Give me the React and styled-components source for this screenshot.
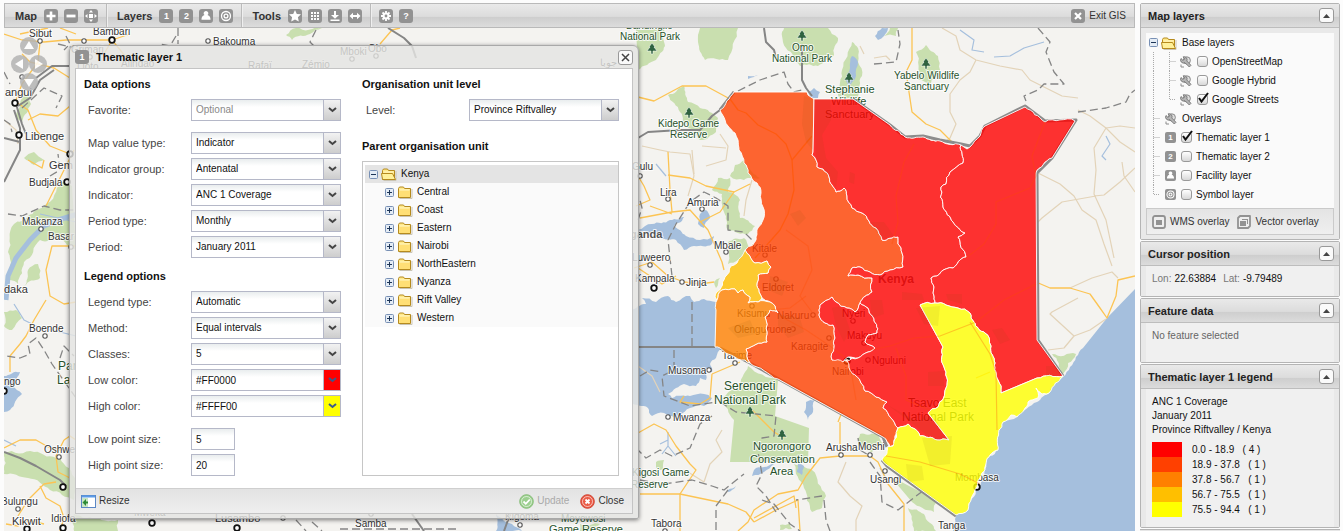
import React from "react";
import styled, { createGlobalStyle, css } from "styled-components";

const GlobalStyle = createGlobalStyle`
  * { box-sizing: border-box; }
  body {
    margin: 0;
    background: #fcfcfc;
    color: #111;
    font: 10px/14px "Liberation Sans", Arial, Helvetica, sans-serif;
  }
  button, input, select { font: inherit; color: inherit; }
  ul, dl, h2, h3, p { margin: 0; padding: 0; list-style: none; }
`;

const barGradient = "linear-gradient(#e9e9e9 0%, #dcdcdc 54%, #cecece 58%, #dcdcdc 100%)";

const Page = styled.div`
  display: flex;
  gap: 5px;
  min-height: 100vh;
  padding: 3px 3px 0 4px;
`;

const MainPanel = styled.main`
  flex: 1;
  min-width: 0;
  display: flex;
  flex-direction: column;
`;

/* ---------- toolbar ---------- */

const Toolbar = styled.div`
  display: flex;
  align-items: stretch;
  height: 25px;
  border: 1px solid #b9b9b9;
  background: ${barGradient};
`;

const ToolGroup = styled.div`
  display: flex;
  align-items: center;
  gap: 6px;
  padding: 0 8px 0 ${(p) => p.$start || 8}px;
  border-right: ${(p) => (p.$last ? "0" : "1px solid #bbb")};
  box-shadow: ${(p) => (p.$last ? "none" : "1px 0 #efefef")};
`;

const ToolTitle = styled.span`
  margin-right: 1px;
  font-size: 11px;
  font-weight: bold;
  color: #333;
`;

const Spacer = styled.div`
  flex: 1;
`;

const PlainButton = styled.button`
  display: inline-flex;
  align-items: center;
  gap: ${(p) => p.$gap || 0}px;
  padding: 0;
  border: 0;
  background: none;
  color: #333;
  cursor: pointer;
  &:disabled { color: #aaa; cursor: default; }
`;

const Tile = styled.span`
  display: inline-flex;
  align-items: center;
  justify-content: center;
  flex: none;
  width: 14px;
  height: 14px;
  border-radius: 3px;
  background: #929292;
  color: #fff;
  font: bold 9px/14px "Liberation Sans", Arial, sans-serif;
  svg { display: block; }
`;

const glyphs = {
  plus: <path d="M7 2.500v9M2.500 7h9" stroke="#fff" strokeWidth="2.600" />,
  minus: <path d="M2.500 7h9" stroke="#fff" strokeWidth="2.800" />,
  full: (
    <g fill="#fff">
      <path d="M7 1l2 2.500H5zM7 13l2-2.500H5zM1 7l2.500-2v4zM13 7l-2.500-2v4z" />
      <rect x="5" y="5" width="4" height="4" />
    </g>
  ),
  person: <path d="M7 2a2.300 2.300 0 0 1 1.500 4.100C10.800 6.800 11.500 8.500 11.500 10.800h-9C2.500 8.500 3.200 6.800 5.500 6.100A2.300 2.300 0 0 1 7 2z" fill="#fff" />,
  target: (
    <g fill="none" stroke="#fff" strokeWidth="1.300">
      <circle cx="7" cy="7" r="4.500" />
      <circle cx="7" cy="7" r="1.900" />
    </g>
  ),
  star: <path d="M7 1l1.800 3.900 4.200.4-3.100 2.900.9 4.300L7 10.400l-3.800 2.100.9-4.300L1 5.300l4.200-.4z" fill="#fff" />,
  grid: <path d="M3 3h2v2H3zM6 3h2v2H6zM9 3h2v2H9zM3 6h2v2H3zM6 6h2v2H6zM9 6h2v2H9zM3 9h2v2H3zM6 9h2v2H6zM9 9h2v2H9z" fill="#fff" />,
  down: <path d="M6 2h2v4h3L7 9.800 3 6h3zM2.500 10.500h9V12h-9z" fill="#fff" />,
  arrows: <path d="M1.500 7L5 3.800V6h4V3.800L12.500 7 9 10.200V8H5v2.200z" fill="#fff" />,
  gear: (
    <g>
      <path d="M7 2v10M2 7h10M3.500 3.500l7 7M10.500 3.500l-7 7" stroke="#fff" strokeWidth="1.800" />
      <circle cx="7" cy="7" r="3.400" fill="#fff" />
      <circle cx="7" cy="7" r="1.400" fill="#929292" />
    </g>
  ),
  cross: <path d="M4 4l6 6M10 4l-6 6" stroke="#fff" strokeWidth="2.200" />,
};

function IconTile({ name, text }) {
  return (
    <Tile aria-hidden="true">
      {text || (
        <svg width="14" height="14" viewBox="0 0 14 14">
          {glyphs[name]}
        </svg>
      )}
    </Tile>
  );
}

function ToolButton({ label, ...icon }) {
  return (
    <PlainButton type="button" aria-label={label}>
      <IconTile {...icon} />
    </PlainButton>
  );
}

/* ---------- map ---------- */

const MapArea = styled.section`
  position: relative;
  flex: 1;
  overflow: hidden;
  background: #f4f3f0;
`;

const MapSvg = styled.svg`
  position: absolute;
  inset: 0;
  width: 100%;
  height: 100%;
  font-family: "Liberation Sans", Arial, sans-serif;
`;

const Label = styled.text`
  font-size: ${(p) => p.$size || 10}px;
  font-weight: ${(p) => (p.$bold ? "bold" : "normal")};
  fill: ${(p) => (p.$park ? "#27522b" : p.$bold ? "#555" : "#333")};
  stroke: #fff;
  stroke-width: 2px;
  stroke-opacity: 0.8;
  stroke-linejoin: round;
  paint-order: stroke;
`;

const GREEN = "#c9dfaf";
const WATER = "#a5bfdd";

const parks = [
  "M700 28L738 28L728 60L705 60L698 42Z",
  "M636 28L664 28L665 46L656 60L638 70Z",
  "M784 28L828 28L838 38L834 55L818 66L800 66L786 48L782 36Z",
  "M838 95L842 70L852 42L858 48L858 62L862 76L858 96L846 104Z",
  "M668 95L684 86L688 102L700 108L718 118L716 132L700 140L688 128L680 112Z",
  "M916 52L926 45L938 56L940 70L930 84L918 80Z",
  "M890 28L898 28L896 36L884 36Z",
  "M735 165L744 160L752 172L760 178L744 180L730 176Z",
  "M718 178L730 178L728 192L740 200L740 218L755 226L748 234L728 230L724 212L722 194L712 190Z",
  "M728 242L744 238L750 248L738 260L728 264Z",
  "M714 282L720 278L716 288Z",
  "M748 366L778 380L775 416L809 428L808 462L730 462L734 420L722 398L738 388Z",
  "M656 462L664 460L664 470L656 468Z",
  "M794 464L812 470L826 496L822 508L812 512L804 488Z",
  "M860 434L876 434L884 444L872 452L858 444Z",
  "M1052 354L1076 354L1063 374Z",
  "M890 476L936 500L934 512L912 502Z",
  "M908 508L924 514L936 531L914 531Z",
  "M286 35L296 28L322 28L310 34L292 40Z",
  "M780 525L790 523L792 529L780 530Z",
  "M24 92L31 104L22 122L16 116L20 104Z",
  "M24 158L34 152L44 160L34 165Z",
  "M62 182L72 186L76 250L60 238L40 240L24 262L18 284L10 280L8 252L14 224L28 216L44 206Z",
  "M4 312L16 310L22 318L12 330L4 326Z",
  "M28 270L38 264L40 278L24 286Z",
  "M4 452L34 452L60 458L76 480L74 500L50 490L28 478L4 474Z",
  "M74 514L92 518L118 520L118 531L74 531Z",
  "M580 524L600 524L592 531L580 531Z",
];

const waters = [
  "M1135 289L1107 318L1083 348L1070 367L1063 377L1050 392L1037 402L1017 417L1003 422L999 430L998 450L990 456L985 470L977 488L968 510L956 515L953 531L1135 531Z",
  "M630 310L646 304L642 298L656 302L668 296L676 302L690 296L694 302L704 299L716 302L715 347L722 348L716 358L710 364L712 372L704 370L706 380L700 378L696 386L684 384L676 388L668 394L672 398L690 396L704 394L712 398L704 406L690 408L680 416L664 413L652 416L648 408L630 402Z",
  "M638 230L652 224L670 220L686 216L674 226L686 236L700 240L714 236L712 244L694 246L684 250L676 240L660 238Z",
  "M700 214L706 210L710 218L704 228L698 224Z",
  "M808 92L814 88L820 92L818 98L810 97Z",
  "M852 56L858 62L856 76L850 88L846 80L850 68Z",
  "M806 402L815 400L813 412L808 420L804 412Z",
  "M754 470L774 464L764 472L752 476Z",
  "M798 464L804 466L802 475L797 472Z",
  "M728 490L736 486L732 490L728 492Z",
  "M875 36L882 28L888 28L884 36L878 40Z",
  "M748 76L758 75L754 77L748 79Z",
  "M4 376L20 372L12 386L22 394L10 410L4 412Z",
  "M496 514L512 524L522 531L496 531Z",
];

const rivers = [
  "M78 214L58 220L44 226L30 240L16 258L8 276L6 300",
  "M14 304L24 320L40 328L60 332L76 336",
  "M40 214L58 218L76 222",
  "M960 30L974 40L972 50L984 52",
  "M994 57L1010 56L1024 48L1044 42",
  "M1106 136L1110 144L1102 156L1106 160",
  "M656 164L666 176",
  "M4 440L16 446",
  "M668 432L668 446L662 454M668 446L676 456M668 440L660 444",
  "M880 468L886 478",
];

const mainRoads = [
  "M638 97L654 101L682 86L706 86L730 99L738 110L746 113L758 125L776 134L786 144L792 160L794 190L788 214L780 230L766 246L755 258",
  "M634 268L652 262L668 276L684 282L700 284L714 282",
  "M668 152L670 190L672 212L690 210L708 230L716 248L722 262L724 270",
  "M668 175L690 178L706 186L734 192L750 184",
  "M638 176L644 186L650 200L636 206",
  "M650 206L672 214M672 212L640 218",
  "M700 222L720 212L734 192",
  "M912 28L912 60L906 72L912 112L926 124L940 130L952 142",
  "M792 160L812 136",
  "M638 268L662 284L676 276",
  "M712 374L740 362M712 374L710 398L700 404L680 402L684 396",
  "M752 410L774 432L784 438",
  "M838 422L842 412M840 422L840 456L820 458L806 476L798 490L778 494L754 510L748 522L738 531",
  "M840 456L870 456L878 462L888 484L904 504L904 531",
  "M638 433L654 424L666 430L676 446L690 464L696 470L688 482L680 494L680 531",
  "M640 494L680 494L728 504L746 512L754 522",
  "M754 518L794 496L796 508",
  "M754 522L776 510L798 500L800 531",
  "M1036 282L1050 288L1070 288L1090 294L1100 308L1107 318L1116 296L1118 280L1135 276",
  "M976 378L990 372",
  "M4 34L22 40L44 42L66 40L84 40L112 40L130 34",
  "M40 42L38 62L22 84L16 100",
  "M16 102L28 110L36 130L50 146L70 154",
  "M22 54L30 62L54 68L70 78",
  "M28 120L40 114L58 116L70 106",
  "M20 34L48 28M60 28L76 34",
  "M44 160L42 168L28 160",
  "M74 150L54 190L46 206",
  "M76 246L52 246L46 270L50 296L64 304L76 302",
  "M46 300L34 320L26 336L20 344L10 356L10 372",
  "M64 440L70 436L76 440M64 440L56 456L58 472L70 478",
  "M4 448L20 440L36 440L50 448L62 450",
  "M18 516L28 500L44 484L56 482",
  "M40 486L46 498L60 506L64 518L60 531",
  "M6 524L18 526L28 520L44 524",
  "M112 40L130 62M112 40L104 54",
  "M380 44L392 30L400 28",
];

const minorRoads = [
  "M642 146L660 150L670 152L690 154L694 176",
  "M720 134L728 146L726 160L706 166",
  "M694 176L688 196M692 150L694 174M702 146L726 148",
  "M942 28L956 36L960 50L976 60L1000 66L1022 70L1030 80L1046 88L1062 96L1078 98",
  "M976 60L970 72L960 80L950 94L950 112L956 124L950 138L946 141",
  "M1078 110L1090 116L1106 128L1120 142L1135 152",
  "M1106 128L1120 126L1135 128",
  "M1106 128L1094 148L1096 170L1094 194L1106 220L1114 258",
  "M1096 196L1062 202L1042 218L1036 224",
  "M1036 172L1060 184L1074 196L1082 210L1096 220L1104 244L1112 266",
  "M1135 168L1120 182L1104 195L1094 196",
  "M1135 192L1124 176L1122 162",
  "M1070 288L1092 278L1112 272L1118 278",
  "M1078 298L1052 312L1050 314L1074 336L1064 348L1048 350",
  "M1106 319L1090 330L1074 336",
  "M752 180L746 200L744 216",
  "M638 366L652 376L660 392",
  "M688 472L704 482L710 464L722 452L716 440L722 430",
  "M846 462L838 482L850 496L862 506L856 520L856 531",
  "M4 120L16 130L18 144",
  "M874 58L886 56L890 60M864 54L860 46",
];

const solidBorders = [
  "M638 138L648 132L680 130L700 130L712 116L720 110L734 92",
  "M764 28L766 42L774 50L776 58M802 44L802 80L806 88L812 96",
  "M638 347L715 347",
  "M4 182L12 166L20 150L20 128L14 110M4 138L20 142L20 128",
  "M16 104L22 124L26 134M36 78L52 66L70 66",
  "M388 28L404 38L412 46L416 58",
  "M4 452L20 458L36 466L60 480L66 486",
  "M18 106L30 98L40 80L54 70",
  "M504 531L508 520L512 510",
  "M412 514L424 531",
];

const dashedBorders = [
  "M738 91L760 80L784 72L788 84L794 92L802 90",
  "M1038 28L1050 42L1046 52L1054 72L1064 84L1044 84L1038 90L1024 96L1026 101",
  "M1078 112L1106 108L1126 102L1130 94L1135 90",
  "M874 64L896 62L900 44L898 30",
  "M692 302L692 347",
  "M674 350L674 370L662 376L664 396L690 406L716 402",
  "M640 376L650 370L662 372",
  "M720 402L736 412L776 416L774 436L762 438L758 452L762 474L756 486L766 496L776 512",
  "M712 416L700 424L690 448L672 456L660 450L646 458L638 450",
  "M640 480L664 484L692 480L712 486L724 490L744 474",
  "M728 490L716 506L716 531",
  "M672 276L668 240L676 224L690 202L704 192L716 198L728 206L728 230L744 232L752 240",
  "M638 220L642 208L640 200",
  "M822 496L796 500M824 500L826 520L830 531",
  "M762 500L774 504L790 524L800 531",
  "M858 438L860 450L870 456",
  "M870 462L880 476L882 502L898 510L924 490",
  "M4 72L10 84M4 120L10 124L12 132",
  "M66 36L70 44L64 50M58 44L74 48",
  "M176 36L170 46L160 44M178 28L178 44",
  "M316 30L310 42L314 46",
  "M8 214L22 216L44 206L60 210L76 210",
  "M50 176L60 170L58 154",
  "M76 398L52 364L44 350L36 338L28 344L30 354L20 358L6 356",
  "M60 358L64 346L74 356",
  "M22 108L44 88L62 96L56 108",
  "M296 520L306 531M312 522L322 531",
  "M340 529L460 529",
];

const regions = [
  { fill: "#ff4000", d: "M734 92L807 92L808 95L814 99L813 152L812 155L816 160L817 167L823 169L829 177L832 185L836 192L840 191L844 188L847 196L852 208L862 213L869 221L876 228L882 240L898 237L898 244L902 253L903 267L890 270L880 275L870 272L860 267L852 268L848 276L858 275L872 278L872 292L860 303L855 312L847 308L836 302L832 297L820 305L819 315L825 323L833 325L835 338L834 348L832 360L847 361L850 370L856 376L861 383L865 391L876 397L887 402L883 408L891 418L898 428L895 445L890 447L883 437L778 379L750 363L746 349L767 342L767 332L765 317L770 310L778 313L775 306L770 302L762 298L759 292L757 283L758 275L768 273L771 267L767 261L755 263L745 250L753 245L756 237L763 220L763 207L761 193L757 183L748 173L744 163L739 150L738 140L735 133L728 126L725 120L720 110Z" },
  { fill: "#ffbf00", d: "M745 250L755 263L767 261L771 267L768 273L758 275L757 283L759 292L762 298L758 302L748 303L750 297L743 290L738 293L735 289L722 290L717 300L715 297L725 277L731 266L737 263Z" },
  { fill: "#ff8000", d: "M717 300L722 290L735 289L738 293L743 290L750 297L748 303L758 302L770 302L775 306L778 313L770 310L765 317L767 332L767 342L746 349L750 363L745 360L720 348L715 347L716 310Z" },
  { fill: "#ff0000", d: "M832 297L836 302L847 308L855 312L860 303L868 308L873 317L877 333L868 335L865 342L875 348L868 352L858 358L848 357L843 362L832 360L834 348L835 338L833 325L825 323L819 315L820 305Z" },
  { fill: "#ff0000", d: "M814 99L853 99L890 125L905 137L923 137L940 141L961 145L963 163L950 172L946 184L941 187L943 207L953 222L965 233L958 237L966 257L953 268L931 278L934 287L935 303L920 305L943 347L944 367L946 388L938 407L928 413L949 440L937 440L920 436L908 424L898 428L891 418L883 408L887 402L876 397L865 391L861 383L856 376L850 370L847 361L858 358L868 352L875 348L865 342L868 335L877 333L873 317L868 308L860 303L872 292L872 278L858 275L848 276L852 268L860 267L870 272L880 275L890 270L903 267L902 253L898 244L898 237L882 240L876 228L869 221L862 213L852 208L847 196L844 188L840 191L836 192L832 185L829 177L823 169L817 167L816 160L812 155L813 152Z" },
  { fill: "#ff0000", d: "M961 145L967 149L970 147L980 136L985 126L1025 107L1045 122L1075 121L1052 158L1036 173L1037 340L1063 376L1037 378L1001 393L998 380L995 363L991 346L985 333L974 322L970 313L958 308L946 305L935 303L934 287L931 278L953 268L966 257L958 237L965 233L953 222L943 207L941 187L946 184L950 172L963 163Z" },
  { fill: "#ffff00", d: "M920 305L935 303L946 305L958 308L970 313L974 322L985 333L991 346L995 363L998 380L1001 393L1037 378L1063 376L1050 392L1042 394L1036 388L1038 398L1028 402L1024 410L1017 417L1011 415L1003 422L999 430L998 450L990 455L985 470L977 487L968 510L956 515L887 465L882 460L886 455L887 447L893 446L898 428L908 424L920 436L937 440L949 440L928 413L938 407L946 388L944 367L943 347Z" },
];

const shades = [
  "M804 96L813 99L813 150L806 142L802 124Z",
  "M814 99L830 99L831 120L822 135L826 158L838 172L836 188L824 170L816 160Z",
  "M790 214L800 210L806 218L798 226Z",
  "M778 314L800 318L804 332L788 338L778 326Z",
  "M916 308L940 306L938 326L924 324Z",
  "M992 330L1002 328L1010 340L1000 344Z",
  "M928 372L944 371L944 386L928 386Z",
  "M886 404L908 420L928 436L946 438L936 420L926 416L918 422Z",
  "M922 438L952 436L950 464L930 466Z",
  "M906 464L922 466L924 480L908 482Z",
  "M1046 366L1056 366L1062 375L1046 377Z",
  "M870 300L882 300L884 314L872 318Z",
  "M728 328L750 320L756 334L738 338Z",
  "M850 172L855 174L854 184L849 182Z",
  "M902 292L922 294L924 300L902 300Z",
  "M946 294L962 294L962 304L948 300Z",
  "M870 222L884 222L894 236L882 240Z",
  "M832 308L842 306L850 330L844 342L836 326Z",
  "M770 276L788 282L782 296L768 290Z",
];

const innerRoads = [
  "M1036 176L1030 188L996 202L996 224L984 244L966 258",
  "M870 350L890 346L914 338L940 336L976 322L1004 300L1036 284",
  "M914 144L904 162L896 196L898 222L892 244",
  "M970 322L990 354L996 372L997 430",
  "M896 348L906 376L906 400L930 410",
  "M886 456L920 462L960 474L980 484",
  "M786 230L808 246L812 270L800 296L812 312",
  "M780 316L806 330L830 346L848 360L852 376L856 400",
  "M1045 122L1032 156L1036 176",
  "M770 310L790 308L806 296",
];

/* Breaks short edges into small irregular steps. The offset depends only on the
   two end points, so neighbouring shapes keep sharing the same boundary. */
function roughEdge(a, b, depth) {
  const len = Math.hypot(a[0] - b[0], a[1] - b[1]);
  if (len > 34 || len < 4 || depth === 0) return [b];
  const [p, q] = a[0] < b[0] || (a[0] === b[0] && a[1] < b[1]) ? [a, b] : [b, a];
  const noise = Math.sin(p[0] * 12.9 + p[1] * 78.2 + q[0] * 37.7 + q[1] * 19.3) * 0.12 * Math.min(len, 14);
  const mid = [
    (p[0] + q[0]) / 2 - ((q[1] - p[1]) / len) * noise,
    (p[1] + q[1]) / 2 + ((q[0] - p[0]) / len) * noise,
  ];
  return [...roughEdge(a, mid, depth - 1), ...roughEdge(mid, b, depth - 1)];
}

function rough(d) {
  const pts = d.slice(1, -1).split("L").map((s) => s.split(" ").map(Number));
  const out = [pts[0]];
  pts.forEach((p, i) => out.push(...roughEdge(p, pts[(i + 1) % pts.length], 3)));
  return `M${out.map((p) => `${p[0].toFixed(1)} ${p[1].toFixed(1)}`).join("L")}Z`;
}

const roughWaters = waters.map(rough);
const roughParks = parks.map(rough);
const roughRegions = regions.map((r) => ({ fill: r.fill, d: rough(r.d) }));

const towns = [
  [40, 41], [84, 41], [112, 40, 1], [208, 41], [15, 103, 1], [19, 135, 1], [70, 154, 1], [67, 182, 1],
  [41, 229], [71, 247], [45, 336], [4, 391, 1], [59, 457], [63, 487, 1], [18, 509], [27, 529, 1], [63, 528, 1],
  [22, 77], [640, 176], [668, 199], [702, 209], [726, 252], [650, 265], [654, 288, 1], [682, 282],
  [765, 255], [776, 279], [752, 306], [813, 315], [793, 329], [853, 321], [829, 338], [864, 343],
  [847, 361, 1], [868, 360], [735, 363], [709, 370], [668, 417], [841, 455], [870, 455], [885, 471],
  [977, 487, 1], [152, 523, 1], [237, 528, 1], [283, 518], [520, 525], [665, 531], [352, 59], [376, 56], [90, 57], [371, 514],
];

const labels = [
  ["Sibut", 29, 37], ["Bambari", 93, 35], ["Bakouma", 213, 45], ["Grimari", 71, 53], ["Lioto", 77, 70],
  ["Alindao", 121, 67], ["Rafaï", 248, 69], ["Zémio", 302, 68], ["Mboki", 340, 55], ["Obo", 368, 52], ["جوبا", 600, 66],
  ["angui", 5, 96, 11], ["Libenge", 25, 140, 11], ["Gem", 49, 169, 11], ["Budjala", 29, 186], ["Makanza", 22, 225],
  ["Basar", 48, 240], ["daka", 4, 293, 11], ["Boende", 29, 332], ["ngo", 4, 385], ["Oshwe", 44, 453],
  ["Bulungu", 1, 505], ["Kikwit", 12, 525, 11], ["Idiofa", 51, 522], ["Mweka", 134, 516], ["Lusambo", 215, 522, 11], ["Samba", 355, 527],
  ["Gulu", 632, 170], ["Lira", 660, 196], ["Amuria", 687, 206], ["Mbale", 714, 249], ["Luweero", 632, 261],
  ["Kampala", 635, 282], ["Jinja", 686, 286], ["Kitale", 752, 252], ["Eldoret", 762, 291], ["Kisumu", 737, 317],
  ["Nakuru", 777, 319], ["Olenguruone", 734, 333], ["Karagite", 791, 350], ["Nyeri", 842, 317], ["Makuyu", 847, 339],
  ["Nguluni", 872, 364], ["Nairobi", 832, 375], ["Tarime", 722, 359], ["Musoma", 668, 374], ["Mwanza", 673, 421],
  ["Arusha", 826, 451], ["Moshi", 858, 450], ["Usangi", 870, 483], ["Mombasa", 955, 481], ["Tabora", 651, 527],
  ["Kigoma", 505, 520], ["Tanga", 938, 529],
];

const boldLabels = [["Uganda", 622, 238, 11], ["Kenya", 878, 283, 12]];

const parkLabels = [
  ["Bandingilo", 626, 29, 10], ["National Park", 620, 40, 10], ["Omo", 792, 51, 10], ["National Park", 772, 62, 10],
  ["Stephanie", 825, 93, 11], ["Wildlife", 831, 105, 11], ["Sanctuary", 825, 118, 11],
  ["Yabelo Wildlife", 894, 79, 10], ["Sanctuary", 904, 90, 10], ["Kidepo Game", 658, 127, 10], ["Reserve", 670, 138, 10],
  ["Serengeti", 724, 390, 12], ["National Park", 714, 404, 12], ["Ngorongoro", 753, 450, 11], ["Conservation", 750, 463, 11],
  ["Area", 770, 475, 11], ["Kigosi Game", 632, 476, 10], ["Reserve", 631, 488, 10], ["Tsavo East", 908, 407, 12],
  ["National Park", 902, 421, 12], ["Moyowosi", 561, 522, 10], ["Game Reserve", 549, 533, 11], ["Par", 58, 370, 12], ["La", 57, 384, 12],
];

const trees = [[652, 49], [802, 36], [849, 78], [926, 64], [689, 113], [750, 412], [782, 435]];

function MapDrawing() {
  const lines = (list, props) => list.map((d, i) => <path key={i} d={d} {...props} />);
  return (
    <MapSvg viewBox="4 28 1131 503" preserveAspectRatio="xMinYMin slice" role="img" aria-label="Map of Kenya by province">
      <rect x="4" y="28" width="1131" height="503" fill="#f4f3f0" />
      {lines(roughParks, { fill: GREEN })}
      {lines(roughWaters, { fill: WATER })}
      <g fill="none" strokeLinejoin="round">
        {lines(rivers, { stroke: WATER, strokeWidth: 1.2 })}
        <path d={rivers[0]} stroke={WATER} strokeWidth="5" />
        {lines(minorRoads, { stroke: "#e3d3b8", strokeWidth: 1.2 })}
        {lines(mainRoads, { stroke: "#fcc453", strokeWidth: 1.3 })}
        {lines(solidBorders, { stroke: "#858585", strokeWidth: 2 })}
        {lines(dashedBorders, { stroke: "#858585", strokeWidth: 1.3, strokeDasharray: "8 4" })}
      </g>
      {trees.map(([x, y]) => (
        <path key={x} d={`M${x} ${y - 6}l3 4h-1l3 4h-4v3h-2v-3h-4l3-4h-1z`} fill="#2f6340" stroke="#fff" strokeWidth=".5" />
      ))}
      {towns.map(([x, y, big]) => (
        <circle key={`${x}-${y}`} cx={x} cy={y} r={big ? 2.8 : 2.2} fill="#fff" stroke={big ? "#111" : "#555"} strokeWidth={big ? 1.8 : 1.1} />
      ))}
      {labels.map(([t, x, y, s]) => <Label key={t} x={x} y={y} $size={s}>{t}</Label>)}
      {boldLabels.map(([t, x, y, s]) => <Label key={t} x={x} y={y} $size={s} $bold>{t}</Label>)}
      {parkLabels.map(([t, x, y, s]) => <Label key={`${x}-${y}`} x={x} y={y} $size={s} $park>{t}</Label>)}
      <path
        d="M720 110L734 92M853 99L890 125L905 137L923 136L940 140L961 144L970 146L980 136L985 126L1025 106L1045 121L1076 120L1052 158L1037 173L1038 340L1063 376M887 447L883 437L750 363L720 348M882 460L887 466L956 516"
        fill="none" stroke="#8c8c8c" strokeWidth="3" strokeLinejoin="round"
      />
      {roughRegions.map((r) => (
        <path key={r.d} d={r.d} fill={r.fill} fillOpacity=".8" stroke="#fff" strokeOpacity=".9" strokeLinejoin="round" />
      ))}
      {lines(shades, { fill: "#6d4a00", fillOpacity: 0.08 })}
      {lines(innerRoads, { fill: "none", stroke: "#ff4d00", strokeOpacity: 0.3, strokeWidth: 1.2 })}
    </MapSvg>
  );
}

const PanControl = styled.div`
  position: absolute;
  left: 7px;
  top: 9px;
  display: flex;
  flex-direction: column;
  align-items: center;
  opacity: 0.85;
`;

const PanRow = styled.div`
  display: flex;
`;

const PanButton = styled.button`
  width: 18px;
  height: 18px;
  padding: 0;
  border: 0;
  border-radius: 50%;
  background: #b4b4b4;
  svg { display: block; }
`;

const panShapes = { up: "M9 4l5 8H4z", down: "M9 14l5-8H4z", left: "M4 9l8-5v10z", right: "M14 9L6 4v10z" };

function Pan({ dir }) {
  return (
    <PanButton type="button" aria-label={`Pan ${dir}`}>
      <svg width="18" height="18"><path d={panShapes[dir]} fill="#fff" /></svg>
    </PanButton>
  );
}

/* ---------- thematic layer window ---------- */

const Window = styled.section`
  position: absolute;
  left: 65px;
  top: 17px;
  width: 570px;
  padding: 0 5px 4px;
  border: 1px solid #a9a9a9;
  border-radius: 6px 6px 2px 2px;
  background: rgba(228, 228, 226, 0.82);
  box-shadow: 0 1px 4px rgba(0, 0, 0, 0.5);
`;

const WindowHeader = styled.header`
  display: flex;
  align-items: center;
  gap: 7px;
  height: 22px;
`;

const WindowTitle = styled.h2`
  flex: 1;
  font-size: 11px;
  color: #111;
`;

const BoxButton = styled.button`
  display: flex;
  align-items: center;
  justify-content: center;
  width: 15px;
  height: 15px;
  padding: 0;
  border: 1px solid #999;
  border-radius: 3px;
  background: #fafafa;
`;

const WindowBody = styled.div`
  border: 1px solid #c4c4c4;
  background: #fff;
`;

const Columns = styled.div`
  display: flex;
  gap: 21px;
  padding: 8px 13px 12px 8px;
`;

const Column = styled.div`
  flex: 1;
  display: flex;
  flex-direction: column;
  gap: ${(p) => p.$gap}px;
`;

const Group = styled.div`
  display: flex;
  flex-direction: column;
  gap: 4px;
  flex: ${(p) => (p.$grow ? 1 : "none")};
`;

const GroupTitle = styled.h3`
  margin-bottom: 4px;
  font-size: 11px;
  line-height: 14px;
`;

const FieldRow = styled.div`
  display: flex;
  align-items: center;
  height: 22px;
  padding-left: 4px;
`;

const FieldLabel = styled.label`
  flex: 0 0 103px;
  font-size: 11px;
  color: #444;
`;

const FieldBox = styled.span`
  position: relative;
  display: flex;
  flex: 1;
`;

const boxStyle = css`
  height: 22px;
  border: 1px solid #b5b8c8;
  border-radius: 0;
  outline: 0;
  background: linear-gradient(#e9edee, #fff 7px);
  color: ${(p) => (p.$faint ? "#888" : "#111")};
`;

const Select = styled.select`
  ${boxStyle}
  flex: 1;
  padding: 0 20px 0 4px;
  appearance: none;
`;

const TextInput = styled.input`
  ${boxStyle}
  width: ${(p) => (p.$short ? "44px" : "100%")};
  padding: 0 4px;
`;

const Trigger = styled.span`
  position: absolute;
  right: 1px;
  top: 1px;
  bottom: 1px;
  display: flex;
  align-items: center;
  justify-content: center;
  width: 17px;
  border-left: 1px solid #b5b8c8;
  background: ${(p) => p.$color || "linear-gradient(#f2f2f2, #cdcdcd)"};
  pointer-events: none;
`;

const TriggerButton = styled(Trigger).attrs({ as: "button", type: "button" })`
  padding: 0;
  border-width: 0 0 0 1px;
  pointer-events: auto;
`;

const Chevron = ({ color = "#444" }) => (
  <svg width="9" height="6" viewBox="0 0 9 6">
    <path d="M1 1l3.500 3L8 1" fill="none" stroke={color} strokeWidth="2" />
  </svg>
);

const toId = (s) => s.toLowerCase().replace(/\W+/g, "-");

function SelectField({ label, value, faint }) {
  const id = toId(label);
  return (
    <FieldRow>
      <FieldLabel htmlFor={id}>{label}</FieldLabel>
      <FieldBox>
        <Select id={id} $faint={faint}><option>{value}</option></Select>
        <Trigger><Chevron /></Trigger>
      </FieldBox>
    </FieldRow>
  );
}

function ColorField({ label, value }) {
  const id = toId(label);
  return (
    <FieldRow>
      <FieldLabel htmlFor={id}>{label}</FieldLabel>
      <FieldBox>
        <TextInput id={id} defaultValue={value} />
        <TriggerButton $color={value} aria-label={`Pick ${label}`}><Chevron color="#3b5b8c" /></TriggerButton>
      </FieldBox>
    </FieldRow>
  );
}

function NumberField({ label, value }) {
  const id = toId(label);
  return (
    <FieldRow>
      <FieldLabel htmlFor={id}>{label}</FieldLabel>
      <TextInput id={id} defaultValue={value} $short />
    </FieldRow>
  );
}

const TreeBox = styled.div`
  flex: 1;
  padding: 3px 0 0 2px;
  border: 1px solid #c6c6c6;
`;

const TreeRow = styled.li`
  display: flex;
  align-items: center;
  height: 18px;
  padding-left: ${(p) => (p.$root ? 4 : 20)}px;
  background: ${(p) => (p.$root ? "#e4e4e4" : "#fafafa")};
`;

const TreeText = styled.span`
  margin-left: 4px;
`;

const Toggle = ({ open }) => (
  <svg width="9" height="9" viewBox="0 0 9 9">
    <rect x=".5" y=".5" width="8" height="8" rx="1" fill="#e4ecf5" stroke="#7890b5" />
    <path d={open ? "M2 4.500h5" : "M2 4.500h5M4.500 2v5"} stroke="#1d3557" />
  </svg>
);

const FolderSvg = styled.svg`
  margin-left: 3px;
`;

const Folder = ({ open }) => (
  <FolderSvg width="16" height="14" viewBox="0 0 16 14">
    <path d="M2.500 13.500h12.500V4" fill="none" stroke="#c9c4b4" />
    <path d="M1.500 12.500v-9l1-1.500h4l1 1.500h6v9z" fill="#ffe98a" stroke="#b58a1e" />
    {open ? (
      <path d="M1.500 12.500l-1-6h11l3 6z" fill="#fff19a" stroke="#b58a1e" />
    ) : (
      <path d="M2.500 5h10.500v7H2.500z" fill="#ffdf75" />
    )}
    <path d="M2.500 5h10" stroke="#fff7c8" />
  </FolderSvg>
);

const WindowFooter = styled.footer`
  display: flex;
  align-items: center;
  gap: 11px;
  height: 25px;
  padding: 0 8px 0 5px;
  border-top: 1px solid #cfcfcf;
  background: linear-gradient(#e3e3e3, #efefef);
`;

const units = ["Central", "Coast", "Eastern", "Nairobi", "NorthEastern", "Nyanza", "Rift Valley", "Western"];

const RoundIcon = ({ color, edge, d }) => (
  <svg width="15" height="15" viewBox="0 0 15 15">
    <circle cx="7.500" cy="7.500" r="6.800" fill={color} stroke={edge} />
    <circle cx="7.500" cy="7.500" r="5" fill="none" stroke="#fff" strokeOpacity=".6" />
    <path d={d} fill="none" stroke="#fff" strokeWidth="1.800" />
  </svg>
);

function LayerWindow() {
  return (
    <Window aria-label="Thematic layer 1">
      <WindowHeader>
        <IconTile text="1" />
        <WindowTitle>Thematic layer 1</WindowTitle>
        <BoxButton type="button" aria-label="Close window">
          <svg width="9" height="9" viewBox="0 0 9 9"><path d="M1 1l7 7M8 1L1 8" stroke="#444" strokeWidth="1.500" /></svg>
        </BoxButton>
      </WindowHeader>
      <WindowBody>
        <Columns>
          <Column $gap={11}>
            <Group>
              <GroupTitle>Data options</GroupTitle>
              <SelectField label="Favorite:" value="Optional" faint />
            </Group>
            <Group>
              <SelectField label="Map value type:" value="Indicator" />
              <SelectField label="Indicator group:" value="Antenatal" />
              <SelectField label="Indicator:" value="ANC 1 Coverage" />
              <SelectField label="Period type:" value="Monthly" />
              <SelectField label="Period:" value="January 2011" />
            </Group>
            <Group>
              <GroupTitle>Legend options</GroupTitle>
              <SelectField label="Legend type:" value="Automatic" />
              <SelectField label="Method:" value="Equal intervals" />
              <SelectField label="Classes:" value="5" />
              <ColorField label="Low color:" value="#FF0000" />
              <ColorField label="High color:" value="#FFFF00" />
            </Group>
            <Group>
              <NumberField label="Low point size:" value="5" />
              <NumberField label="High point size:" value="20" />
            </Group>
          </Column>
          <Column $gap={18}>
            <Group>
              <GroupTitle>Organisation unit level</GroupTitle>
              <SelectField label="Level:" value="Province Riftvalley" />
            </Group>
            <Group $grow>
              <GroupTitle>Parent organisation unit</GroupTitle>
              <TreeBox>
                <ul>
                  <TreeRow $root><Toggle open /><Folder open /><TreeText>Kenya</TreeText></TreeRow>
                  {units.map((u) => (
                    <TreeRow key={u}><Toggle /><Folder /><TreeText>{u}</TreeText></TreeRow>
                  ))}
                </ul>
              </TreeBox>
            </Group>
          </Column>
        </Columns>
        <WindowFooter>
          <PlainButton type="button" $gap={3}>
            <svg width="15" height="13" viewBox="0 0 15 13">
              <rect x=".5" y=".5" width="14" height="12" fill="#fff" stroke="#5b87c5" />
              <path d="M1 1.500h13" stroke="#5b9be8" strokeWidth="2" />
              <path d="M1 3h6v9H1z" fill="#c9e6c4" />
              <path d="M1.500 7.500L5 4v7z" fill="#2d8a35" />
              <path d="M4 7.500h3" stroke="#2d8a35" strokeWidth="2" />
            </svg>
            Resize
          </PlainButton>
          <Spacer />
          <PlainButton type="button" $gap={3} disabled>
            <RoundIcon color="#9ccf8f" edge="#86bd78" d="M4.500 7.500l2.300 2.300 4-4.300" />
            Update
          </PlainButton>
          <PlainButton type="button" $gap={3}>
            <RoundIcon color="#ea5a45" edge="#cf4433" d="M5.500 5.500l4 4M9.500 5.500l-4 4" />
            Close
          </PlainButton>
        </WindowFooter>
      </WindowBody>
    </Window>
  );
}

/* ---------- sidebar ---------- */

const Sidebar = styled.aside`
  flex: 0 0 200px;
  display: flex;
  flex-direction: column;
  gap: 1px;
`;

const Panel = styled.section`
  border: 1px solid #b4b4b4;
  border-radius: 2px;
  background: #efefef;
`;

const PanelHeader = styled.header`
  display: flex;
  align-items: center;
  justify-content: space-between;
  height: 24px;
  padding: 0 5px 0 7px;
  border-bottom: 1px solid #bdbdbd;
  background: ${barGradient};
`;

const PanelTitle = styled.h2`
  font-size: 11px;
  color: #222;
`;

const PanelText = styled.div`
  min-height: ${(p) => p.$min || 0}px;
  margin: 0 5px;
  padding: 6px 6px 10px;
  background: #f0f0f0;
  box-shadow: -5px 0 #e9e9e9, 5px 0 #e9e9e9;
  color: ${(p) => p.$color || "#111"};
`;

function SidePanel({ title, children }) {
  return (
    <Panel>
      <PanelHeader>
        <PanelTitle>{title}</PanelTitle>
        <BoxButton type="button" aria-label={`Collapse ${title}`}>
          <svg width="7" height="4" viewBox="0 0 7 4"><path d="M0 4l3.500-4L7 4z" fill="#444" /></svg>
        </BoxButton>
      </PanelHeader>
      {children}
    </Panel>
  );
}

const LayerBox = styled.div`
  padding: 5px 5px 4px;
  background: #e9e9e9;
`;

const LayerList = styled.ul`
  padding: 0 0 4px 3px;
  background: #fafafa;
`;

const LayerRow = styled.li`
  display: flex;
  align-items: center;
  height: 19px;
`;

const LayerName = styled.label`
  display: flex;
  align-items: center;
  gap: 4px;
  margin-left: 5px;
`;

const Guide = styled.span`
  display: block;
  flex: none;
  width: ${(p) => p.$width}px;
  height: 19px;
  svg { display: block; }
`;

/* Dotted connectors: v = through line, e = elbow at the end, t = through line with a stub. */
const guidePaths = { v: "M4.500 0V19", e: "M4.500 0V9.500H11", t: "M4.500 0V19M4.500 9.500H11" };

const Connector = ({ kind, width = 16 }) => (
  <Guide $width={width}>
    <svg width={width} height="19">
      <path d={guidePaths[kind]} fill="none" stroke="#aaa" strokeDasharray="1 1" />
    </svg>
  </Guide>
);

const CheckBox = styled.input.attrs({ type: "checkbox" })`
  appearance: none;
  width: 11px;
  height: 11px;
  margin: 0;
  border: 1px solid #999;
  border-radius: 3px;
  background: linear-gradient(#fff, #d8d8d8);
`;

const CheckWrap = styled.span`
  position: relative;
  display: flex;
`;

const Tick = styled.svg`
  position: absolute;
  left: 1px;
  bottom: 1px;
  pointer-events: none;
`;

function LayerCheck({ name, checked }) {
  return (
    <LayerName>
      <CheckWrap>
        <CheckBox defaultChecked={checked} />
        {checked && <Tick width="12" height="12"><path d="M1 6l2.500 3.500L10 1" fill="none" stroke="#111" strokeWidth="2" /></Tick>}
      </CheckWrap>
      {name}
    </LayerName>
  );
}

const Wrench = () => (
  <svg width="12" height="12" viewBox="0 0 12 12">
    <circle cx="6.800" cy="4.400" r="3.600" fill="#ddd" stroke="#8a8a8a" />
    <path d="M1 2.500a3 3 0 0 0 4 4.200l4.300 4.300 1.700-1.700L6.800 5A3 3 0 0 0 3 .9l1.800 1.900-1.700 1.700z" fill="#b5b5b5" stroke="#6c6c6c" strokeWidth=".8" />
    <path d="M1 8.500v2.500h3" fill="none" stroke="#8a8a8a" />
  </svg>
);

const RootLabel = styled.span`
  margin-left: 5px;
`;

const OverlayBar = styled.div`
  display: flex;
  align-items: center;
  gap: 8px;
  height: 27px;
  padding: 0 5px;
  border: 1px solid #cacaca;
  background: linear-gradient(#e4e4e4, #efefef);
`;

const WmsIcon = () => (
  <svg width="14" height="14" viewBox="0 0 14 14">
    <rect x="1" y="1" width="12" height="12" rx="2" fill="#eee" stroke="#929292" strokeWidth="1.800" />
    <path d="M4 5h6v5H4z" fill="#929292" />
  </svg>
);

const VectorIcon = () => (
  <svg width="14" height="14" viewBox="0 0 14 14">
    <path d="M3 1h10v10l-2 2H1V3z" fill="#eee" stroke="#929292" strokeWidth="1.800" strokeLinejoin="round" />
    <path d="M3 6h6v5H3zM5 4h6v5h-1V5H5z" fill="#929292" />
  </svg>
);

const Coordinates = styled.dl`
  display: flex;
  gap: 3px;
  dt { color: #777; }
  dd { margin: 0 4px 0 0; }
`;

const LegendList = styled.ul`
  margin-top: 5px;
`;

const LegendItem = styled.li`
  display: flex;
  gap: 10px;
  line-height: 15px;
  white-space: pre;
  &::before {
    content: "";
    width: 30px;
    background: ${(p) => p.$color};
  }
`;

const classes = [
  ["#ff0000", "0.0 - 18.9   ( 4 )"],
  ["#ff4000", "18.9 - 37.8   ( 1 )"],
  ["#ff8000", "37.8 - 56.7   ( 1 )"],
  ["#ffbf00", "56.7 - 75.5   ( 1 )"],
  ["#ffff00", "75.5 - 94.4   ( 1 )"],
];

const baseLayers = [["OpenStreetMap", false], ["Google Hybrid", false], ["Google Streets", true]];
const overlays = [
  [{ text: "1" }, "Thematic layer 1", true],
  [{ text: "2" }, "Thematic layer 2", false],
  [{ name: "person" }, "Facility layer", false],
  [{ name: "target" }, "Symbol layer", false],
];

const SmallTile = styled.span`
  display: flex;
  ${Tile} { width: 11px; height: 11px; font-size: 8px; line-height: 11px; border-radius: 2px; }
  svg { width: 11px; height: 11px; }
`;

const NextPanel = styled.div`
  flex: 1;
  border-top: 1px solid #b4b4b4;
  background: #e6e6e6;
`;

export default function App() {
  return (
    <>
      <GlobalStyle />
      <Page>
        <MainPanel>
          <Toolbar role="toolbar">
            <ToolGroup $start={10}>
              <ToolTitle>Map</ToolTitle>
              <ToolButton label="Zoom in" name="plus" />
              <ToolButton label="Zoom out" name="minus" />
              <ToolButton label="Zoom to visible extent" name="full" />
            </ToolGroup>
            <ToolGroup $start={10}>
              <ToolTitle>Layers</ToolTitle>
              <ToolButton label="Thematic layer 1" text="1" />
              <ToolButton label="Thematic layer 2" text="2" />
              <ToolButton label="Facility layer" name="person" />
              <ToolButton label="Symbol layer" name="target" />
            </ToolGroup>
            <ToolGroup $start={10}>
              <ToolTitle>Tools</ToolTitle>
              <ToolButton label="Favorites" name="star" />
              <ToolButton label="Legend sets" name="grid" />
              <ToolButton label="Export" name="down" />
              <ToolButton label="Measure" name="arrows" />
            </ToolGroup>
            <ToolGroup $last>
              <ToolButton label="Settings" name="gear" />
              <ToolButton label="Help" text="?" />
            </ToolGroup>
            <Spacer />
            <ToolGroup $last>
              <PlainButton type="button" $gap={4}>
                <IconTile name="cross" />
                Exit GIS
              </PlainButton>
            </ToolGroup>
          </Toolbar>
          <MapArea>
            <MapDrawing />
            <PanControl>
              <Pan dir="up" />
              <PanRow><Pan dir="left" /><Pan dir="right" /></PanRow>
              <Pan dir="down" />
            </PanControl>
            <LayerWindow />
          </MapArea>
        </MainPanel>

        <Sidebar>
          <SidePanel title="Map layers">
            <LayerBox>
              <LayerList>
                <LayerRow><Toggle open /><Folder open /><RootLabel>Base layers</RootLabel></LayerRow>
                {baseLayers.map(([name, on], i) => (
                  <LayerRow key={name}>
                    <Connector kind="v" />
                    <Connector kind={i === 2 ? "e" : "t"} width={15} />
                    <Wrench />
                    <LayerCheck name={name} checked={on} />
                  </LayerRow>
                ))}
                <LayerRow><Connector kind="t" /><Wrench /><RootLabel>Overlays</RootLabel></LayerRow>
                {overlays.map(([icon, name, on], i) => (
                  <LayerRow key={name}>
                    <Connector kind={i === 3 ? "e" : "t"} />
                    <SmallTile><IconTile {...icon} /></SmallTile>
                    <LayerCheck name={name} checked={on} />
                  </LayerRow>
                ))}
              </LayerList>
              <OverlayBar>
                <PlainButton type="button" $gap={4}><WmsIcon />WMS overlay</PlainButton>
                <PlainButton type="button" $gap={4}><VectorIcon />Vector overlay</PlainButton>
              </OverlayBar>
            </LayerBox>
          </SidePanel>

          <SidePanel title="Cursor position">
            <PanelText>
              <Coordinates><dt>Lon:</dt><dd>22.63884</dd><dt>Lat:</dt><dd>-9.79489</dd></Coordinates>
            </PanelText>
          </SidePanel>

          <SidePanel title="Feature data">
            <PanelText $min={39} $color="#666">No feature selected</PanelText>
          </SidePanel>

          <SidePanel title="Thematic layer 1 legend">
            <PanelText>
              <p>ANC 1 Coverage</p>
              <p>January 2011</p>
              <p>Province Riftvalley / Kenya</p>
              <LegendList>
                {classes.map(([color, text]) => <LegendItem key={color} $color={color}>{text}</LegendItem>)}
              </LegendList>
            </PanelText>
          </SidePanel>
          <NextPanel />
        </Sidebar>
      </Page>
    </>
  );
}
